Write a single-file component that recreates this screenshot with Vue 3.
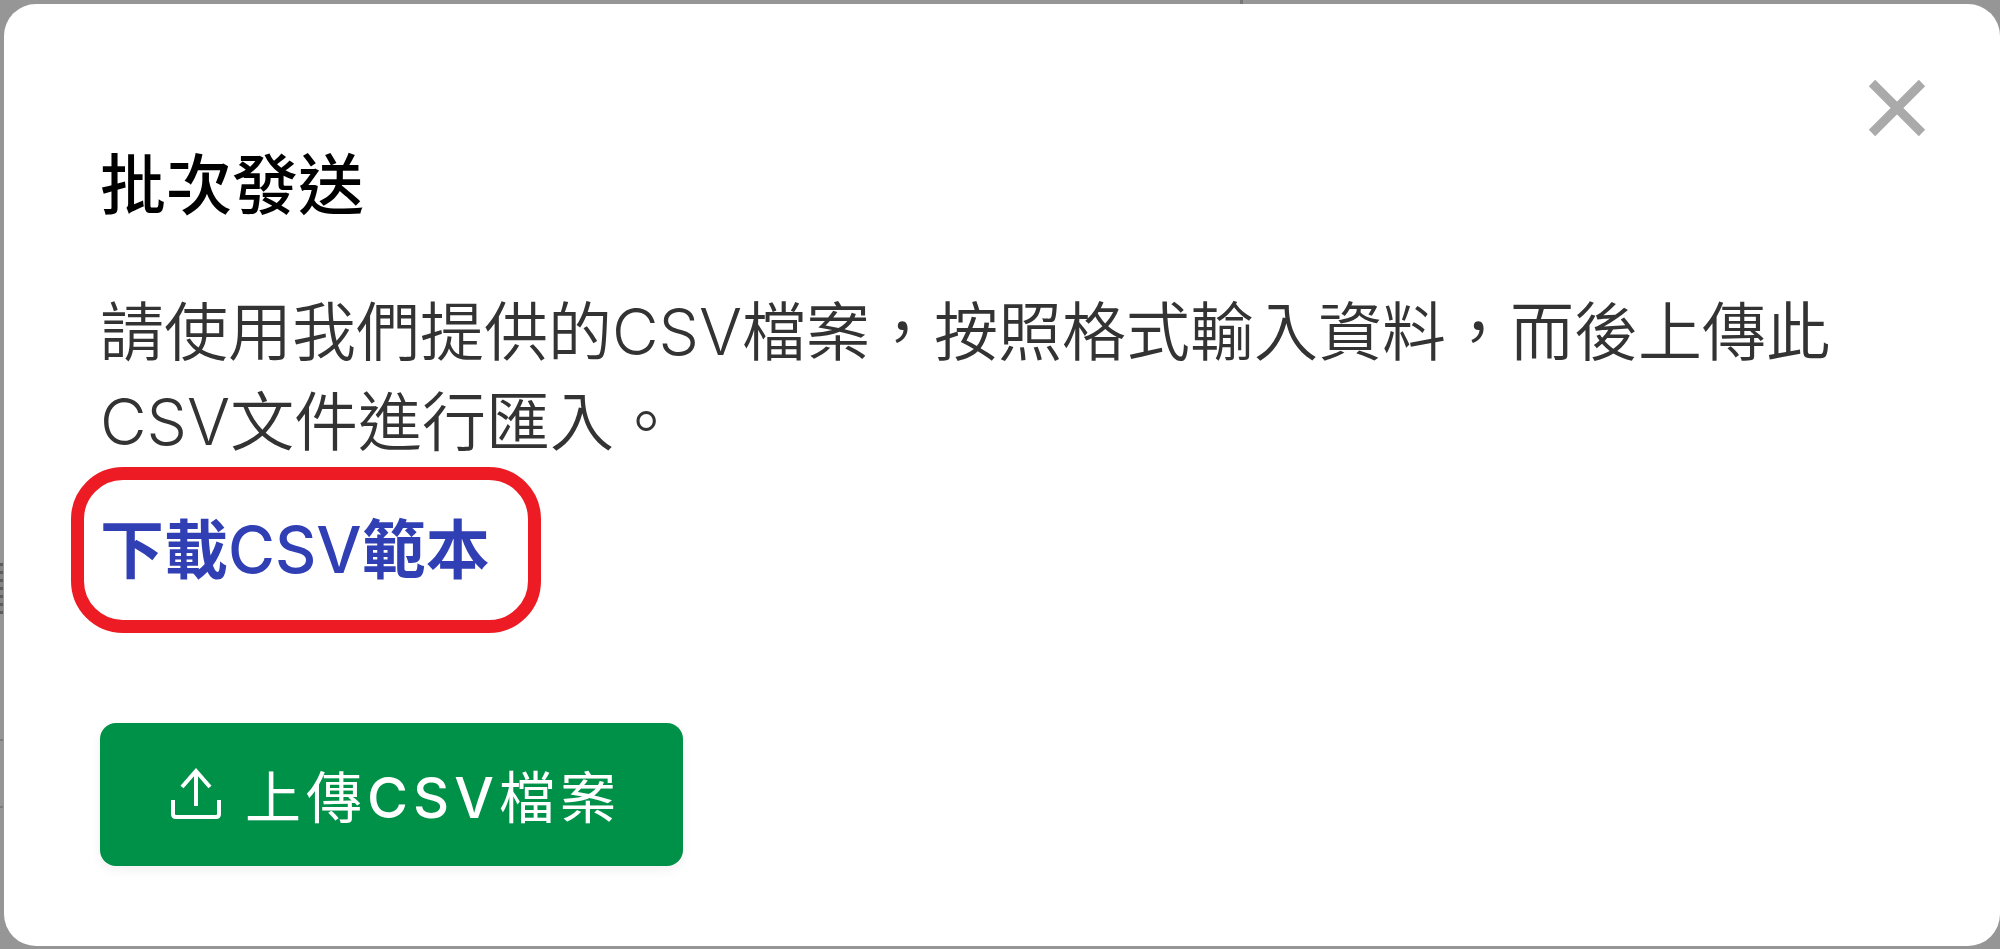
<script setup>
const title = '批次發送'
const description = '請使用我們提供的CSV檔案，按照格式輸入資料，而後上傳此CSV文件進行匯入。'
</script>

<template>
  <div class="backdrop" lang="zh-TW">
    <section class="dialog" role="dialog" aria-modal="true" aria-labelledby="dialog-title">
      <button class="close" type="button" aria-label="關閉">
        <svg viewBox="0 0 58 58" aria-hidden="true">
          <path d="M4 4L54 54M54 4L4 54" fill="none" stroke="currentColor" stroke-width="9" />
        </svg>
      </button>
      <h1 id="dialog-title" class="title">{{ title }}</h1>
      <p class="description">{{ description }}</p>
      <a class="template-link" href="#template">下載<span class="format">CSV</span>範本</a>
      <button class="upload" type="button">
        <svg class="upload-icon" viewBox="0 0 52 52" aria-hidden="true">
          <g fill="none" stroke="currentColor" stroke-width="4">
            <path d="M26 38V3M12 19L26 3L40 19" />
            <path d="M3 32V46Q3 49 6 49H46Q49 49 49 46V32" />
          </g>
        </svg>
        <span class="upload-label">上傳<span class="format">CSV</span>檔案</span>
      </button>
    </section>
  </div>
</template>

<style>
body {
  margin: 0;
}
</style>

<style scoped>
.backdrop {
  box-sizing: border-box;
  display: flex;
  min-height: 100vh;
  padding: 4px 0 3px 4px;
  background:
    linear-gradient(#777, #777) 1240px 0 / 3px 4px no-repeat,
    linear-gradient(#7d7d7d, #7d7d7d) 0 739px / 3px 2px no-repeat,
    linear-gradient(#7d7d7d, #7d7d7d) 0 806px / 3px 2px no-repeat,
    repeating-linear-gradient(#5c5c5c 0 3px, #858585 3px 8px) 0 563px / 3px 51px no-repeat,
    #969696;
  font-family: Inter, "Noto Sans CJK TC", sans-serif;
}

.dialog {
  position: relative;
  box-sizing: border-box;
  display: flex;
  flex: 1;
  flex-direction: column;
  align-items: flex-start;
  padding: 136px 112px 76px 96px;
  border-radius: 32px;
  background: #fff;
}

.title {
  margin: 0;
  color: #000;
  font-size: 66px;
  font-weight: 500;
  line-height: 90px;
}

.description {
  margin: 57px 0 0;
  color: #333;
  font-size: 64px;
  font-weight: 350;
  line-height: 90px;
}

.template-link {
  position: relative;
  margin-top: 38px;
  color: #303fb4;
  font-size: 64px;
  font-weight: 700;
  line-height: 90px;
  text-decoration: none;
}

.template-link .format {
  font-weight: 500;
}

.template-link::after {
  content: "";
  position: absolute;
  inset: -38px -51px -38px -29px;
  border: 13px solid #ed1c24;
  border-radius: 52px;
}

.upload {
  display: flex;
  align-items: center;
  gap: 23px;
  margin-top: 128px;
  padding: 28px 62px 29px 70px;
  border: 0;
  border-radius: 16px;
  background: #009148;
  box-shadow: 0 4px 12px rgba(0, 0, 0, 0.06);
  color: #fff;
  font-family: inherit;
  font-size: 56px;
  font-weight: 400;
  letter-spacing: 5px;
}

.upload-label {
  padding-top: 8px;
  line-height: 78px;
}

.upload-label .format {
  font-weight: 500;
}

.upload-icon {
  width: 52px;
  height: 52px;
}

.close {
  position: absolute;
  top: 75px;
  right: 74px;
  display: flex;
  padding: 0;
  border: 0;
  background: none;
  color: #aaa;
}

.close svg {
  width: 58px;
  height: 58px;
}
</style>
